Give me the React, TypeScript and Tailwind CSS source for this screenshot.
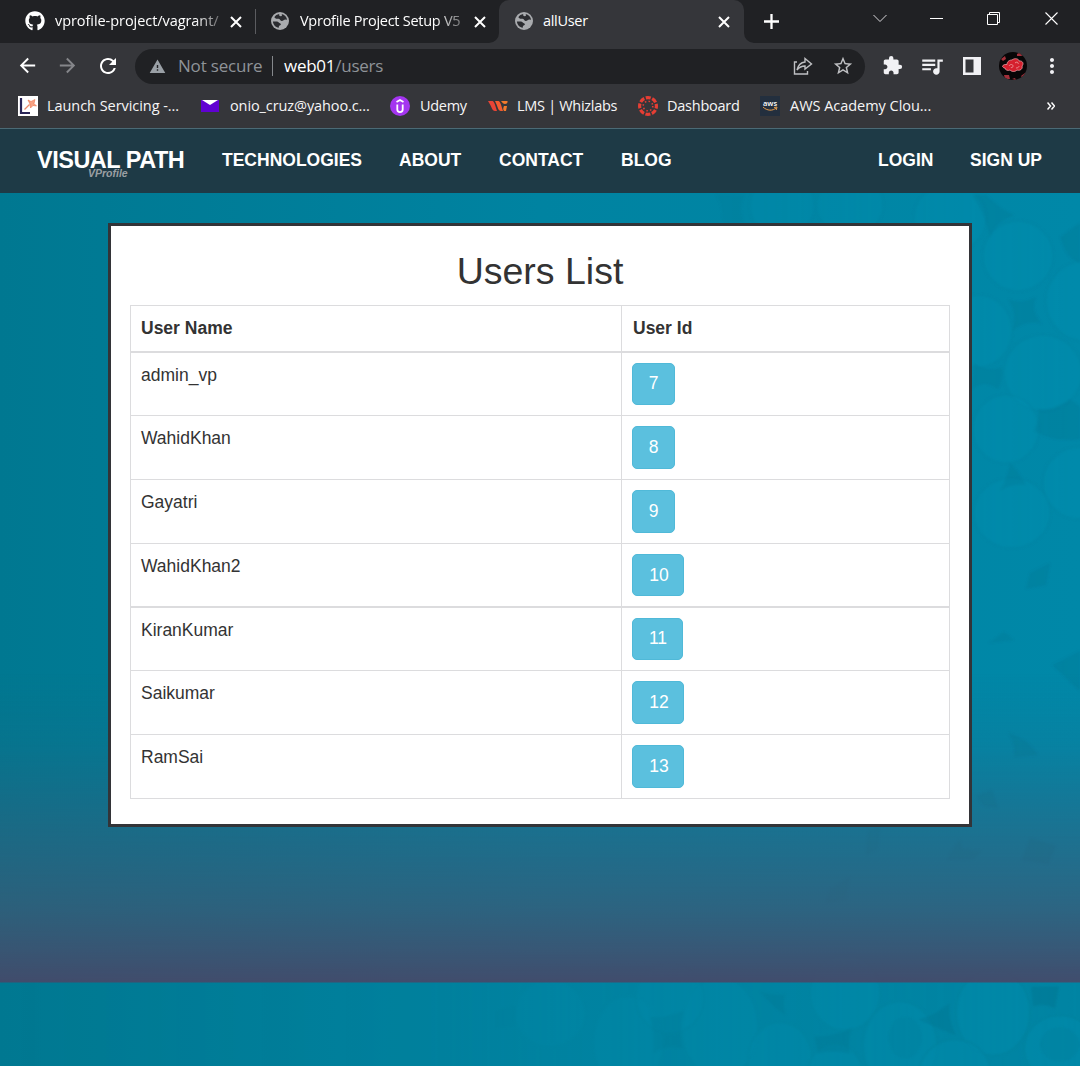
import React from "react";
import { FaGithub } from "react-icons/fa";
import {
  MdArrowBack,
  MdArrowForward,
  MdExtension,
  MdMoreVert,
  MdQueueMusic,
  MdRefresh,
  MdStarBorder,
  MdWarning,
} from "react-icons/md";

const users = [
  { name: "admin_vp", id: 7, row: "h-[63px] border-b", button: "h-[42px] w-[43px] pb-px" },
  { name: "WahidKhan", id: 8, row: "h-16 border-b", button: "h-[43px] w-[43px]" },
  { name: "Gayatri", id: 9, row: "h-16 border-b", button: "h-[43px] w-[43px]" },
  { name: "WahidKhan2", id: 10, row: "h-16 border-b-2", button: "h-[42px] w-[52px] pl-[2px]" },
  { name: "KiranKumar", id: 11, row: "h-[63px] border-b", button: "h-[42px] w-[51px] pl-px pb-px" },
  { name: "Saikumar", id: 12, row: "h-16 border-b", button: "h-[43px] w-[52px] pl-[2px]" },
  { name: "RamSai", id: 13, row: "h-16 border-b", button: "h-[43px] w-[52px] pl-[2px]" },
];

function CloseIcon({ className }: { className: string }) {
  return (
    <svg className={className} viewBox="0 0 12 12" fill="none" stroke="#fff" strokeWidth="2">
      <path d="M1 1l10 10M11 1L1 11" />
    </svg>
  );
}

function GlobeIcon({ className }: { className: string }) {
  return (
    <svg className={className} viewBox="0 0 18 18">
      <circle cx="9" cy="9" r="9" fill="#a9abae" />
      <path
        d="M8.200 2C6 2.300 4.500 3.500 3.300 5.200L5 6.800h2.500c1.500 0 1.500 2 3 2.200 1.800.2 2.200-1.500 4-1.500l1.600.2C15.800 5 13.500 2.500 10.700 2l.3 1.500c-.4 1.300-2.300.8-2.800 0z"
        fill="#2b2c30"
      />
      <path d="M1.900 9.500h4c1.600 0 1.600 1.400 3 1.700 1.500.4 1.200 2-.2 2.200-.8.200-.9 1-.9 2.400C4.500 15.300 2.200 12.800 1.900 9.500z" fill="#2b2c30" />
    </svg>
  );
}

function TabStrip() {
  return (
    <div className="flex h-[43px] bg-[#202124] text-[14.5px] text-white">
      <div className="flex w-[255px] items-center pb-px pl-[25px]">
        <FaGithub className="size-5 shrink-0" />
        <span className="ml-[10px] w-[164px] whitespace-nowrap [mask-image:linear-gradient(to_right,#000_85%,transparent_108%)]">
          <span className="tracking-[-0.06px]">vprofile-project/vagrant/</span>
        </span>
        <CloseIcon className="mt-px ml-[11px] size-3 shrink-0" />
      </div>
      <div className="mt-[9px] h-[25px] w-px bg-[#5b5c60]" />
      <div className="flex w-[243px] items-center pb-px pl-[15px]">
        <GlobeIcon className="size-[18px] shrink-0" />
        <span className="ml-[11px] w-[164px] whitespace-nowrap [mask-image:linear-gradient(to_right,#000_82%,transparent_108%)]">
          <span className="tracking-[-0.27px]">Vprofile Project Setup V5</span>
        </span>
        <CloseIcon className="mt-px ml-[10px] size-3 shrink-0" />
      </div>
      <div className="relative flex w-[245px] items-center rounded-t-[10px] bg-[#35363a] pb-px pl-4">
        <svg className="absolute bottom-0 -left-[10px] size-[10px]" viewBox="0 0 10 10" fill="#35363a">
          <path d="M10 0v10H0A10 10 0 0 0 10 0" />
        </svg>
        <svg className="absolute -right-[10px] bottom-0 size-[10px]" viewBox="0 0 10 10" fill="#35363a">
          <path d="M0 0v10h10A10 10 0 0 1 0 0" />
        </svg>
        <GlobeIcon className="size-[18px]" />
        <span className="ml-[10px] w-[175px] tracking-[-0.3px]">allUser</span>
        <CloseIcon className="mt-px size-3" />
      </div>
      <svg className="mt-[14px] ml-5 size-[15px]" viewBox="0 0 15 15" stroke="#fff" strokeWidth="2.3">
        <path d="M7.500 0v15M0 7.500h15" />
      </svg>
      <svg className="mt-[14px] ml-[94px] h-[9px] w-[14px]" viewBox="0 0 14 9" fill="none" stroke="#d8d8da">
        <path d="M.5 1L7 7.500 13.500 1" />
      </svg>
      <div className="mt-[18px] ml-[43px] h-px w-[13px] bg-white" />
      <svg className="mt-[12px] ml-[44px] size-[13px]" viewBox="0 0 13 13" fill="none" stroke="#fff">
        <path d="M.5 2.500h10v10H.5zM2.500 2.500v-2h10v10h-2" />
      </svg>
      <svg className="mt-[12px] ml-[45px] size-[13px]" viewBox="0 0 13 13" fill="none" stroke="#fff" strokeWidth="1.1">
        <path d="M.5.5l12 12M12.500.5l-12 12" />
      </svg>
    </div>
  );
}

function Avatar() {
  return (
    <svg className="size-7" viewBox="0 0 28 28">
      <defs>
        <clipPath id="avatar-disc">
          <circle cx="14" cy="14" r="14" />
        </clipPath>
      </defs>
      <g clipPath="url(#avatar-disc)">
        <rect width="28" height="28" fill="#080607" />
        <path d="M18 2l4-2 3 3-3 1-4 0zM2 7l4-3 1 3-3 2zM5 23l5 0 1 4-5 0zM22 24l4-3 2 2-4 4zM13 27l3-1 1 2z" fill="#a3303a" />
        <path
          d="M3.500 14.500C4 12 7 12.500 8 12.500 8 9 11 8 13 8 16 5.500 20 7 20 9c4-.5 5 3 3 5 1 3-2 5-5 4-2 2-5 2-7 0-2 1-5 0-5-2-1 0-2-.5-2.500-1.500z"
          fill="#d5202e"
          stroke="#e9a0a5"
          strokeWidth=".8"
        />
        <path d="M10 14c1-2 4-2 4 0s-2 2-2 1M16 11c2-2 4 0 3 1M17 16c2 0 3-1 3-2" fill="none" stroke="#f0b3b5" strokeWidth=".7" />
      </g>
    </svg>
  );
}

function Toolbar() {
  return (
    <div className="flex h-[45px] items-center bg-[#35363a]">
      <MdArrowBack className="ml-[16px] size-[23px] text-white" />
      <MdArrowForward className="ml-[17px] size-[23px] text-[#85868a]" />
      <MdRefresh className="ml-[17px] size-6 text-white" />
      <div className="mt-px ml-[15px] flex h-[35px] w-[730px] items-center rounded-full bg-[#202124] pl-[14px]">
        <MdWarning className="size-[17px] text-[#9aa0a6]" />
        <span className="ml-[12px] w-[94px] text-[17px] tracking-[-0.18px] whitespace-nowrap text-[#8f9398]">Not secure</span>
        <span className="h-5 w-px bg-[#85888c]" />
        <span className="ml-[11px] w-[509px] text-[17px] tracking-[-0.25px] text-[#8f9398]">
          <span className="text-white">web01</span>/users
        </span>
        <svg className="h-[18px] w-5" viewBox="0 0 20 18" fill="none" stroke="#bfc0c3" strokeWidth="1.4">
          <path d="M4 5H1.500v12h13v-3M12 1.500L18.500 7 12 12V9C8 9 6 10.500 4 13 5 8.500 7.500 5.500 12 5z" />
        </svg>
        <MdStarBorder className="ml-[19px] size-[22px] text-[#bfc0c3]" />
      </div>
      <MdExtension className="ml-[17px] size-[21px] text-[#f1f1f4]" />
      <MdQueueMusic className="ml-[16px] size-[26px] text-[#f1f1f4]" />
      <svg className="ml-[18px] size-[18px]" viewBox="0 0 18 18">
        <path d="M0 0h18v18H0zM2.500 2.500v13h8v-13z" fill="#f1f1f4" fillRule="evenodd" />
      </svg>
      <div className="ml-[18px]">
        <Avatar />
      </div>
      <MdMoreVert className="ml-[13px] size-6 text-[#f1f1f4]" />
    </div>
  );
}

function Bookmarks() {
  return (
    <div className="flex h-10 items-start bg-[#35363a] pt-[8px] pl-[18px] text-[14.500px] leading-5 whitespace-nowrap text-[#f5f5f6]">
      <div className="flex w-[182px] items-center">
        <svg className="mr-[9px] size-5" viewBox="0 0 20 20">
          <path d="M0 0h20v20H0z" fill="#fff" />
          <path d="M3 2v15h9" fill="none" stroke="#292557" strokeWidth="2.2" />
          <path d="M6.500 13.500l5-5" fill="none" stroke="#ef8a68" strokeWidth="1.200" />
          <path d="M10 4l3 1.500 4-2-1 4 2.500 2.500-3.500-.5-2.500 2.500-.5-4z" fill="#f5a284" stroke="#ef7048" strokeWidth=".6" />
        </svg>
        <span className="tracking-[-0.05px]">Launch Servicing -...</span>
      </div>
      <div className="flex w-[190px] items-center">
        <svg className="mr-[10px] h-3 w-5" viewBox="0 0 20 12">
          <path d="M1 0h18v12H1z" fill="#6001d2" />
          <path d="M2 0h16l-8 5z" fill="#fff" />
        </svg>
        <span className="tracking-[-0.1px]">onio_cruz@yahoo.c...</span>
      </div>
      <div className="flex w-[98px] items-center">
        <svg className="mr-[10px] size-5" viewBox="0 0 20 20">
          <circle cx="10" cy="10" r="10" fill="#a435f0" />
          <path d="M6.500 6L10 4l3.500 2M7.300 8.500v5c0 3.400 5.400 3.400 5.400 0v-5" fill="none" stroke="#fff" strokeWidth="1.800" />
        </svg>
        <span className="tracking-[-0.3px]">Udemy</span>
      </div>
      <div className="flex w-[150px] items-center">
        <svg className="mr-[9px] h-3 w-5" viewBox="0 0 20 12">
          <path d="M0 1h4c2 0 2.500 2 5 10H7C4 11 4 7 0 1z" fill="#e94436" />
          <path d="M7 1h3c2 0 2.500 2 5 10h-2C10 11 10 7 7 1z" fill="#f45b30" />
          <path d="M13 1h6.500c.5 2-1 3-2.500 3s-2.500-1-4-3zM16 6h3l-1 5h-2c-1-1-1-3 0-5z" fill="#f37a2c" />
        </svg>
        <span className="tracking-[-0.3px]">LMS | Whizlabs</span>
      </div>
      <div className="flex w-[122px] items-center">
        <svg className="mr-[9px] size-5" viewBox="0 0 20 20" fill="none" stroke="#e63e34">
          <circle cx="10" cy="10" r="8.400" strokeWidth="3.200" strokeDasharray="5 1.597" strokeDashoffset="2.500" />
          <circle cx="10" cy="10" r="4.800" strokeWidth="1.600" strokeDasharray="1.500 2.270" />
        </svg>
        <span className="tracking-[-0.25px]">Dashboard</span>
      </div>
      <div className="flex w-[285px] items-center">
        <svg className="mr-[10px] size-5" viewBox="0 0 20 20">
          <rect width="20" height="20" fill="#232f3e" />
          <text x="10" y="9.500" textAnchor="middle" fontSize="7.500" fontWeight="600" fontFamily="Open Sans" fill="#fff">aws</text>
          <path d="M3 11c4 4 10 4 13 1M14 11.500l3-.5-.8 3" fill="none" stroke="#e39b4b" strokeWidth="1" />
        </svg>
        <span className="tracking-[-0.03px]">AWS Academy Clou...</span>
      </div>
      <svg className="mt-[6px] ml-[2px] h-2 w-2" viewBox="0 0 8 8" fill="none" stroke="#fff" strokeWidth="1.500">
        <path d="M.5.5L3.500 4l-3 3.500M4.500.5l3 3.500-3 3.500" />
      </svg>
    </div>
  );
}

const discs = [
  [1018, 63, 35, 35], [978, 138, 34, 36], [1085, 108, 39, 40], [1043, 180, 39, 38],
  [950, 25, 36, 34], [850, 12, 33, 30], [782, 13, 32, 31],
  [1006, 236, 33, 34], [1080, 290, 37, 36], [1012, 320, 38, 35],
];

const gaps = [
  "M1008 106Q1020 112 1036 104Q1030 118 1042 131Q1026 126 1012 138Q1018 120 1008 106",
  "M974 170Q988 180 1002 174Q1004 186 998 196Q984 186 972 196Z",
  "M1038 216Q1054 218 1070 206L1080 214V246Q1056 250 1034 238Q1040 226 1038 216",
  "M986 2Q1002 18 1014 22Q996 28 990 44Q984 18 972 2Z",
  "M1060 44L1080 30V70Q1066 66 1060 44",
  "M1010 270Q1018 278 1026 292Q1012 290 1000 298Q1008 284 1010 270",
  "M716 2h28q-6 14 0 28h-22q2-16-6-28",
  "M1030 380l20-10-4 22-20 4zM992 448l12-9 10 8-26 3zM1052 472l28-14v40z",
  "M1008 540Q1026 544 1038 562L1014 564Q1016 550 1008 540",
  "M976 603l16-6 6 18-14-2zM950 660l10-14 2 10 20 2-8 8-26 1z",
  "M868 638l12-4-2 22-12 6zM830 696l20-12-4 22-20 4zM1030 645l26 8-8 18-26-4z",
];

const lowerDiscs = [
  [993, 30, 37, 43], [900, 63, 37, 44], [845, 10, 35, 38], [955, 92, 36, 35],
  [720, 45, 38, 50], [628, 60, 35, 46], [1060, 66, 36, 33], [780, 77, 32, 37],
  [550, 31, 35, 33], [670, 16, 34, 35], [835, 94, 28, 33],
];

function Backdrop() {
  return (
    <svg aria-hidden="true" className="absolute inset-0 h-full w-full" viewBox="0 0 1080 873" preserveAspectRatio="none">
      <defs>
        <linearGradient id="dusk" x2="0" y2="1">
          <stop stopColor="#3d5575" stopOpacity="0" />
          <stop offset=".22" stopColor="#3d5575" stopOpacity=".1" />
          <stop offset=".45" stopColor="#3f5674" stopOpacity=".36" />
          <stop offset=".75" stopColor="#425470" stopOpacity=".66" />
          <stop offset="1" stopColor="#454969" stopOpacity=".94" />
        </linearGradient>
        <linearGradient id="fade">
          <stop stopColor="#fff" stopOpacity="0" />
          <stop offset=".4" stopColor="#fff" stopOpacity=".12" />
          <stop offset="1" stopColor="#fff" />
        </linearGradient>
        <mask id="right-side">
          <rect width="1080" height="873" fill="url(#fade)" />
        </mask>
        <filter id="soften">
          <feGaussianBlur stdDeviation="1" />
        </filter>
      </defs>
      <g mask="url(#right-side)">
        <g filter="url(#soften)">
          <g fill="#008db0" stroke="#007f9d" strokeWidth="1.500" fillOpacity=".45" strokeOpacity=".3">
            {discs.map(([cx, cy, rx, ry]) => (
              <ellipse key={`${cx}-${cy}`} cx={cx} cy={cy} rx={rx} ry={ry} />
            ))}
          </g>
          {gaps.map((d) => (
            <path key={d} d={d} fill="#006f89" opacity=".22" />
          ))}
        </g>
        <g transform="translate(0 789.500)">
          <rect width="1080" height="84" fill="#007f9c" opacity=".35" />
          <g filter="url(#soften)">
            <g fill="#008bac" fillOpacity=".55" stroke="#00829e" strokeWidth="1.500">
              {lowerDiscs.map(([cx, cy, rx, ry]) => (
                <ellipse key={`${cx}-${cy}`} cx={cx} cy={cy} rx={rx} ry={ry} />
              ))}
            </g>
            <path
              d="M760 9q14 4 25 3-3 12 1 21-14-8-26-24zM918 37q18-4 32-17-3 14 6 33-20-8-38-16zM650 34q16 2 34-6-6 20-1 38-20-4-30 6 2-20-3-38zM814 54q22 0 38-9-5 14-2 26-16-4-32 0zM1031 4h28l-4 22q-12-6-22-2zM495 28l22-6-2 22-20 2z"
              fill="#00708a"
              opacity=".35"
            />
            <ellipse cx="905" cy="55" rx="17" ry="21" fill="#007b98" opacity=".3" />
            <ellipse cx="1060" cy="62" rx="20" ry="17" fill="#007b98" opacity=".3" />
          </g>
        </g>
      </g>
      <rect y="480" width="1080" height="309.500" fill="url(#dusk)" />
    </svg>
  );
}

function SiteNav() {
  return (
    <nav className="flex h-[65px] items-start border-t border-[#4b6a75] bg-[#1e3a46] pt-[19px] text-[17.5px] leading-[25px] font-bold text-white">
      <div className="relative ml-[37px] w-[185px] text-[23.500px] tracking-[-0.5px] whitespace-nowrap">
        VISUAL PATH
        <span className="absolute top-[19px] left-[51px] text-[10.500px] leading-[13px] tracking-normal text-[#9a9fa3] italic">
          VProfile
        </span>
      </div>
      <a className="w-[177px]">TECHNOLOGIES</a>
      <a className="w-[100px]">ABOUT</a>
      <a className="w-[122px]">CONTACT</a>
      <a className="w-[257px]">BLOG</a>
      <a className="w-[92px]">LOGIN</a>
      <a className="whitespace-nowrap">SIGN UP</a>
    </nav>
  );
}

function UsersTable() {
  return (
    <div className="border-x border-t border-[#dcdcde] text-[17.5px] leading-[25px]">
      <div className="flex h-[47px] border-b-2 border-[#dcdcde] font-bold">
        <div className="w-[491px] border-r border-[#dcdcde] pt-[10px] pl-[10px]">User Name</div>
        <div className="pt-[10px] pl-[11px]">User Id</div>
      </div>
      {users.map((user) => (
        <div key={user.id} className={`flex border-[#dcdcde] ${user.row}`}>
          <div className="w-[491px] border-r border-[#dcdcde] pt-[10px] pl-[10px]">{user.name}</div>
          <div className="pt-[10px] pl-[10px]">
            <button
              className={`flex items-center justify-center rounded-[5px] border border-[#50b9d8] bg-[#5bc0de] text-white ${user.button}`}
            >
              {user.id}
            </button>
          </div>
        </div>
      ))}
    </div>
  );
}

export default function App() {
  return (
    <div className="flex h-[1066px] w-[1080px] flex-col overflow-hidden">
      <header className="shrink-0 font-['Open_Sans',sans-serif]">
        <TabStrip />
        <Toolbar />
        <Bookmarks />
      </header>
      <div className="h-[938px] font-['Liberation_Sans',Arial,sans-serif] text-[#333]">
        <SiteNav />
        <main className="relative h-[873px] bg-linear-to-r from-[#007891] via-[#0083a1] to-[#0088a8] pt-[30px]">
          <Backdrop />
          <section className="relative mx-auto h-[604px] w-[864px] border-[3px] border-[#333438] bg-white px-[19px] pt-[25px]">
            <h2 className="mb-[13px] text-center text-[37.5px] leading-[41px]">Users List</h2>
            <UsersTable />
          </section>
        </main>
      </div>
    </div>
  );
}
